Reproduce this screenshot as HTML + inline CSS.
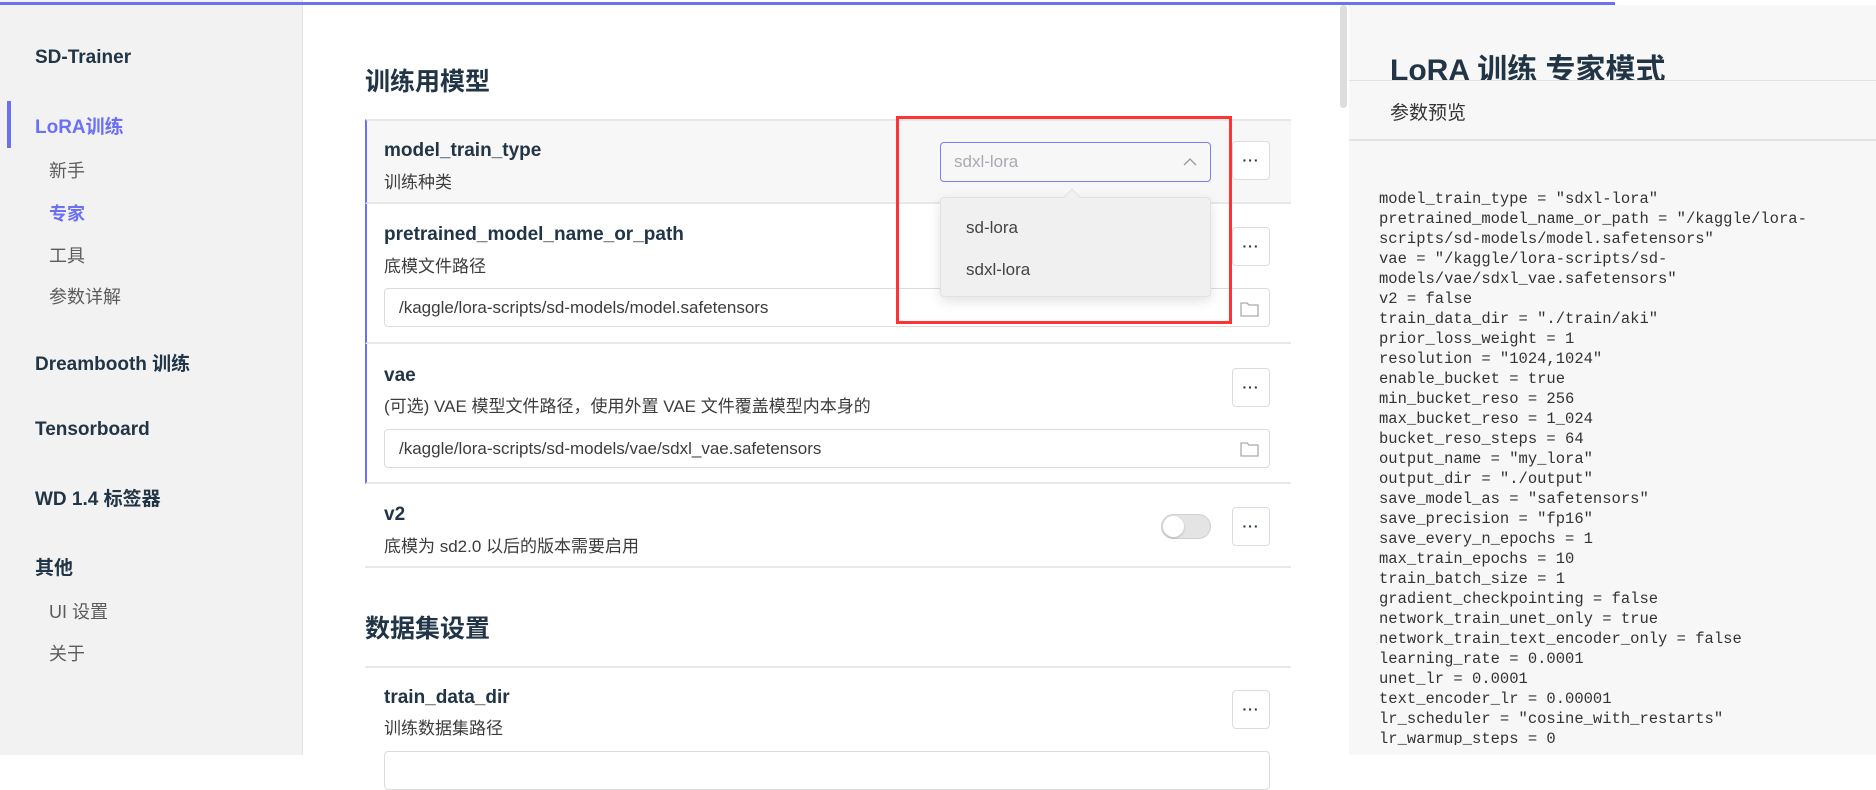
<!DOCTYPE html>
<html><head><meta charset="utf-8"><style>
*{margin:0;padding:0;box-sizing:border-box}
body{width:1876px;height:755px;overflow:hidden;background:#fff;font-family:"Liberation Sans","Noto Sans CJK SC",sans-serif;color:#213547;position:relative}
.a{position:absolute;white-space:nowrap}
#side{position:absolute;left:0;top:0;width:303px;height:755px;background:#f2f2f2;border-right:1px solid #e6e6e6}
.h{font-size:19px;font-weight:bold;left:35px;color:#213547}
.s{font-size:18px;left:49px;color:#5c5c5c}
.lbl{font-size:19px;font-weight:600;left:384px;color:#213547}
.desc{font-size:17px;left:384px;color:#3c3c3c}
.card{position:absolute;left:365px;width:926px;border-bottom:2px solid #e8e8e8}
.blue{border-left:2px solid #6b70f5}
.btn{position:absolute;left:1232px;width:38px;height:39px;border:1px solid #dcdcdc;border-radius:4px;background:#fff;text-align:center;font-size:14px;line-height:37px;color:#213547;letter-spacing:1px;font-weight:bold}
.inp{position:absolute;left:384px;width:886px;height:39px;border:1px solid #dcdcdc;border-radius:4px;background:#fff;font-size:17px;color:#3c3c3c;padding-left:14px;line-height:37px}
.fold{position:absolute;left:1240px;width:19px;height:15px}
pre{font-family:"Liberation Mono",monospace;font-size:15.5px;line-height:20px;color:#333;white-space:pre !important}
</style></head><body>
<div class="a" style="left:0;top:2px;width:1615px;height:3px;background:#6b70f5;z-index:5"></div>
<div id="side">
<div class="a" style="left:7px;top:101px;width:4px;height:47px;background:#6b70f5"></div>
<div class="a h" style="top:47px">SD-Trainer</div>
<div class="a h" style="top:112px;color:#6b70f5">LoRA训练</div>
<div class="a s" style="top:157px">新手</div>
<div class="a s" style="top:200px;color:#6b70f5;font-weight:bold">专家</div>
<div class="a s" style="top:242px">工具</div>
<div class="a s" style="top:283px">参数详解</div>
<div class="a h" style="top:349px">Dreambooth 训练</div>
<div class="a h" style="top:419px">Tensorboard</div>
<div class="a h" style="top:484px">WD 1.4 标签器</div>
<div class="a h" style="top:553px">其他</div>
<div class="a s" style="top:598px">UI 设置</div>
<div class="a s" style="top:640px">关于</div>
</div>
<div class="a" style="left:1340px;top:5px;width:7px;height:103px;background:#ddd;border-radius:4px"></div>

<div class="a" style="left:365px;top:62px;font-size:25px;font-weight:bold">训练用模型</div>
<div class="card blue" style="top:119px;height:85px;background:#f7f7f7;border-top:2px solid #e8e8e8"></div>
<div class="a lbl" style="top:140px">model_train_type</div>
<div class="a desc" style="top:168px">训练种类</div>
<div class="a" style="left:940px;top:142px;width:271px;height:40px;border:1px solid #7b7ff2;border-radius:4px;background:#f7f7f7;font-size:17px;color:#a8abb2;padding-left:13px;line-height:38px">sdxl-lora<svg style="position:absolute;right:13px;top:14px" width="14" height="9" viewBox="0 0 14 9"><path d="M1 8 L7 2 L13 8" fill="none" stroke="#999" stroke-width="1.3"/></svg></div>
<div class="btn" style="top:141px">···</div>

<div class="card blue" style="top:204px;height:140px"></div>
<div class="a lbl" style="top:224px">pretrained_model_name_or_path</div>
<div class="a desc" style="top:252px">底模文件路径</div>
<div class="btn" style="top:227px">···</div>
<div class="inp" style="top:288px">/kaggle/lora-scripts/sd-models/model.safetensors</div>
<svg class="fold" style="top:302px" viewBox="0 0 19 15"><path d="M1 1 H7 L9 3 H18 V14 H1 Z" fill="none" stroke="#aaa" stroke-width="1.3"/></svg>

<div class="card blue" style="top:344px;height:140px"></div>
<div class="a lbl" style="top:365px">vae</div>
<div class="a desc" style="top:392px">(可选) VAE 模型文件路径，使用外置 VAE 文件覆盖模型内本身的</div>
<div class="btn" style="top:368px">···</div>
<div class="inp" style="top:429px">/kaggle/lora-scripts/sd-models/vae/sdxl_vae.safetensors</div>
<svg class="fold" style="top:442px" viewBox="0 0 19 15"><path d="M1 1 H7 L9 3 H18 V14 H1 Z" fill="none" stroke="#aaa" stroke-width="1.3"/></svg>

<div class="card" style="top:484px;height:84px"></div>
<div class="a lbl" style="top:504px">v2</div>
<div class="a desc" style="top:532px">底模为 sd2.0 以后的版本需要启用</div>
<div class="a" style="left:1161px;top:514px;width:50px;height:25px;border-radius:13px;background:#e4e4e4;border:1px solid #d0d0d0"><div style="position:absolute;left:1px;top:1px;width:21px;height:21px;border-radius:50%;background:#fff;box-shadow:0 1px 2px rgba(0,0,0,.2)"></div></div>
<div class="btn" style="top:507px">···</div>

<div class="a" style="left:365px;top:609px;font-size:25px;font-weight:bold">数据集设置</div>
<div class="card" style="top:666px;height:100px;border-top:2px solid #e8e8e8;border-bottom:none"></div>
<div class="a lbl" style="top:687px">train_data_dir</div>
<div class="a desc" style="top:714px">训练数据集路径</div>
<div class="btn" style="top:690px">···</div>
<div class="inp" style="top:751px"></div>

<!-- dropdown -->
<div class="a" style="left:940px;top:197px;width:271px;height:100px;background:#f0f0f0;border:1px solid #e2e2e2;border-radius:4px;box-shadow:0 4px 12px rgba(0,0,0,.12)">
<div class="a" style="left:25px;top:20px;font-size:17px;color:#444">sd-lora</div>
<div class="a" style="left:25px;top:62px;font-size:17px;color:#444">sdxl-lora</div>
</div>
<div class="a" style="left:1066px;top:191px;width:12px;height:12px;background:#f0f0f0;border-left:1px solid #e2e2e2;border-top:1px solid #e2e2e2;transform:rotate(45deg)"></div>
<div class="a" style="left:896px;top:116px;width:336px;height:208px;border:3px solid #f33;z-index:6"></div>

<!-- right panel -->
<div class="a" style="left:1349px;top:5px;width:527px;height:750px;background:#f7f7f7;overflow:hidden">
<div class="a" style="left:41px;top:40px;font-size:30px;font-weight:bold;height:35px;overflow:hidden">LoRA 训练 专家模式</div>
<div class="a" style="left:0;top:75px;width:527px;height:61px;background:#f7f7f7;border-top:1px solid #e3e3e3;border-bottom:2px solid #e3e3e3"></div>
<div class="a" style="left:41px;top:93px;font-size:19px;color:#333">参数预览</div>
<pre class="a" style="left:30px;top:184px;height:556px;overflow:hidden">model_train_type = "sdxl-lora"
pretrained_model_name_or_path = "/kaggle/lora-
scripts/sd-models/model.safetensors"
vae = "/kaggle/lora-scripts/sd-
models/vae/sdxl_vae.safetensors"
v2 = false
train_data_dir = "./train/aki"
prior_loss_weight = 1
resolution = "1024,1024"
enable_bucket = true
min_bucket_reso = 256
max_bucket_reso = 1_024
bucket_reso_steps = 64
output_name = "my_lora"
output_dir = "./output"
save_model_as = "safetensors"
save_precision = "fp16"
save_every_n_epochs = 1
max_train_epochs = 10
train_batch_size = 1
gradient_checkpointing = false
network_train_unet_only = true
network_train_text_encoder_only = false
learning_rate = 0.0001
unet_lr = 0.0001
text_encoder_lr = 0.00001
lr_scheduler = "cosine_with_restarts"
lr_warmup_steps = 0</pre>
</div>
</body></html>
